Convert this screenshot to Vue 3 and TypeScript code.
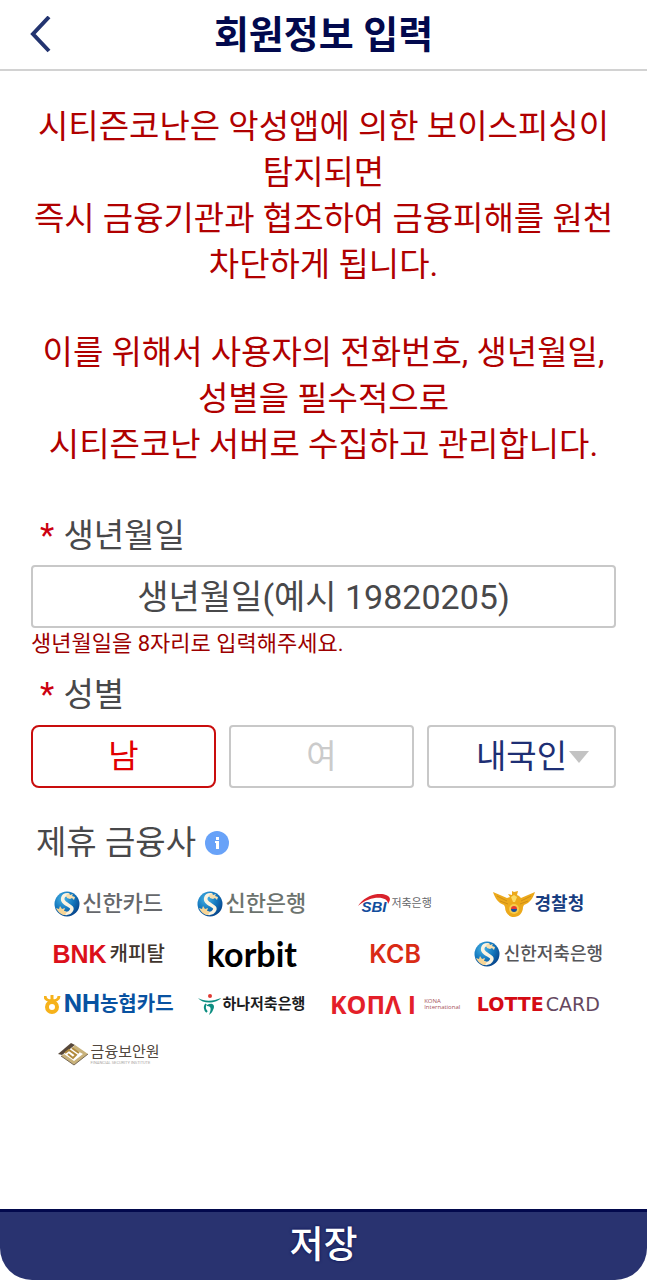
<script setup lang="ts">
import { ref } from 'vue'

const birth = ref('')
const gender = ref<'M' | 'F'>('M')
const nationality = ref('domestic')
</script>

<template>
  <div class="page">
    <header class="header">
      <button type="button" class="back" aria-label="뒤로">
        <svg width="22" height="38" viewBox="0 0 22 38" fill="none">
          <path d="M19 1 L3 18 L19 35" stroke="#233470" stroke-width="4" />
        </svg>
      </button>
      <h1>회원정보 입력</h1>
    </header>

    <main class="content">
      <section class="notice">
        <p>시티즌코난은 악성앱에 의한 보이스피싱이 탐지되면<br />즉시 금융기관과 협조하여 금융피해를 원천 차단하게 됩니다.</p>
        <p>이를 위해서 사용자의 전화번호, 생년월일, 성별을 필수적으로<br />시티즌코난 서버로 수집하고 관리합니다.</p>
      </section>

      <form id="member" class="form" @submit.prevent>
        <label class="title" for="birth"><span class="star">*</span> 생년월일</label>
        <input id="birth" v-model="birth" class="box birth" type="text" inputmode="numeric" maxlength="8" placeholder="생년월일(예시 19820205)" />
        <p class="hint">생년월일을 8자리로 입력해주세요.</p>

        <div id="gender-title" class="title gender-title"><span class="star">*</span> 성별</div>
        <div class="choices" role="group" aria-labelledby="gender-title">
          <label class="box choice" :class="{ on: gender === 'M' }">
            <input v-model="gender" type="radio" name="gender" value="M" />남
          </label>
          <label class="box choice" :class="{ on: gender === 'F' }">
            <input v-model="gender" type="radio" name="gender" value="F" />여
          </label>
          <div class="nation">
            <select v-model="nationality" class="box" aria-label="국적">
              <option value="domestic">내국인</option>
              <option value="foreign">외국인</option>
            </select>
            <svg class="arrow" width="20" height="12" viewBox="0 0 20 12"><path d="M0 0H20L10 12Z" fill="#c3c3c3" /></svg>
          </div>
        </div>
      </form>

      <section class="partners">
        <h2>
          제휴 금융사
          <button type="button" class="info" aria-label="제휴 금융사 안내">
            <svg width="24" height="24" viewBox="0 0 24 24">
              <circle cx="12" cy="12" r="12" fill="#68a2f8" />
              <rect x="11" y="6" width="3" height="3" fill="#fff" />
              <path d="M10 10H14V18H11V12H10Z" fill="#fff" />
            </svg>
          </button>
        </h2>

        <svg class="defs" aria-hidden="true">
          <defs>
            <radialGradient id="globe" cx="35%" cy="30%" r="75%">
              <stop offset="0" stop-color="#48b3e5" />
              <stop offset="0.55" stop-color="#1478be" />
              <stop offset="1" stop-color="#07448b" />
            </radialGradient>
            <symbol id="shinhan" viewBox="0 0 26 26">
              <circle cx="13" cy="13" r="12.5" fill="url(#globe)" />
              <path d="M15 4 C8 3 7 9 11 12 C15 15 20 16 17 20 C15 23 11 23 8 21" stroke="#fbf4e2" stroke-width="3.5" fill="none" />
              <path d="M12 4 L15 2 L16 4 L19 3 L18 5 L21 6 L20 9 L18 7 L16 8 L13 7Z" fill="#f7dfaf" />
              <path d="M2 17 L5 18 L6 15 L8 18 L11 17 L10 20 L13 21 L11 24 C7 24 4 21 2 17Z" fill="#f7d596" />
            </symbol>
          </defs>
        </svg>

        <ul class="logos">
          <li class="shinhan card"><svg width="26" height="26"><use href="#shinhan" /></svg><span>신한카드</span></li>
          <li class="shinhan bank"><svg width="26" height="26"><use href="#shinhan" /></svg><span>신한은행</span></li>
          <li class="sbi">
            <span class="sbi-mark">
              <svg width="32" height="14" viewBox="0 0 32 14"><path d="M0 12 C7 1 22 -3 30 2 C33 4 32 7 30 10 C30 2 13 1 0 12Z" fill="#d9222c" /></svg>
              <b>SBI</b>
            </span>
            <span>저축은행</span>
          </li>
          <li class="police">
            <svg width="42" height="28" viewBox="0 0 42 28">
              <path d="M0 2 L14 8 L17 7 L15 4 L19 5 L19 1 L21 2 L25 1 L24 5 L26 6 L28 8 L42 2 C40 8 37 13 31 15 L30 17 C30 23 26 27 21 27 C16 27 12 23 12 17 L11 15 C5 13 2 8 0 2Z" fill="#eca91b" />
              <path d="M4 6 L14 11 M7 11 L15 14 M38 6 L28 11 M35 11 L27 14" stroke="#d08f16" fill="none" />
              <path d="M18 7 L21 5 L24 7 L22 12 H20Z" fill="#fbdc65" />
              <circle cx="21" cy="19" r="5" fill="#f6ca4b" />
              <path d="M18 19 A3 3 0 0 1 24 19Z" fill="#e43835" />
              <path d="M18 19 A3 3 0 0 0 24 19Z" fill="#164e9b" />
            </svg>
            <span>경찰청</span>
          </li>
          <li class="bnk"><b>BNK</b><span>캐피탈</span></li>
          <li class="korbit">korbit</li>
          <li class="kcb">KCB</li>
          <li class="shinhan savings"><svg width="26" height="26"><use href="#shinhan" /></svg><span>신한저축은행</span></li>
          <li class="nh">
            <svg width="17" height="19" viewBox="0 0 17 19" fill="none">
              <circle cx="8" cy="12" r="5" stroke="#f6b21b" stroke-width="4" />
              <path d="M1 1 C1 4 4 6 8 6 C12 6 15 4 15 1 M8 0 V6" stroke="#f6b21b" stroke-width="3" />
            </svg>
            <b>NH</b><span>농협카드</span>
          </li>
          <li class="hana">
            <svg width="24" height="22" viewBox="0 0 24 22">
              <circle cx="12" cy="3" r="2" fill="#e13b35" />
              <path d="M0 5 C7 9 16 8 23 5 C20 10 5 12 0 5Z" fill="#0b8d80" />
              <path d="M8 11 C6 14 7 17 9 19" stroke="#0b8d80" stroke-width="2" fill="none" />
              <path d="M9 12 C14 9 18 12 15 17 C14 20 12 21 11 22 C13 17 14 13 9 13Z" fill="#0b8d80" />
            </svg>
            <span>하나저축은행</span>
          </li>
          <li class="kona"><b>KOΠΛ I</b><small>KONA<br />International</small></li>
          <li class="lotte"><b>LOTTE</b><span>CARD</span></li>
          <li class="fsi">
            <svg width="30" height="24" viewBox="0 0 30 24" fill="none">
              <path d="M0 12 L13 1 L17 3 L4 13Z" fill="#57483a" />
              <path d="M17 3 L30 12 L16 23 L3 14 L6 12 L16 19 L25 12 L14 6Z" fill="#c9b27a" />
              <path d="M3 14 L16 23 L30 12" stroke="#776957" />
              <path d="M7 11 L11 8 L18 13 L15 16 L10 12 M14 6 L21 11" stroke="#b28b3d" stroke-width="2" />
            </svg>
            <span class="fsi-text"><span>금융보안원</span><small>FINANCIAL SECURITY INSTITUTE</small></span>
          </li>
        </ul>
      </section>
    </main>

    <button class="save" type="submit" form="member">저장</button>
  </div>
</template>

<style>
body {
  margin: 0;
  background: #fff;
}
</style>

<style scoped>
* {
  box-sizing: border-box;
}
.page {
  min-height: 100vh;
  display: flex;
  flex-direction: column;
  font-family: Roboto, "Noto Sans CJK KR", sans-serif;
  background: #fff;
}
button, input, select {
  font-family: inherit;
}
button {
  border: 0;
  padding: 0;
  background: none;
}
h1, h2, p, ul {
  margin: 0;
  padding: 0;
}
svg {
  display: block;
  flex: none;
}
.header {
  height: 71px;
  border-bottom: 2px solid #d2d2d2;
  display: grid;
  grid-template-columns: 60px 1fr 60px;
  align-items: center;
}
.back {
  justify-self: end;
  padding-right: 8px;
}
h1 {
  text-align: center;
  font-size: 38px;
  line-height: 68px;
  color: #02094d;
}
.content {
  flex: 1;
  padding: 33px 31px;
}
.notice {
  display: grid;
  gap: 42px;
  text-align: center;
  color: #b00000;
  font-size: 33px;
  line-height: 46px;
  word-break: keep-all;
}
.form {
  margin-top: 44px;
}
.title {
  display: block;
  padding-left: 9px;
  font-size: 33px;
  line-height: 48px;
  color: #48484a;
}
.star {
  margin-right: 1px;
  color: #cc0010;
}
.box {
  height: 63px;
  border: 2px solid #c8c8c8;
  border-radius: 4px;
  background: #fff;
  font-size: 33px;
}
.birth {
  display: block;
  width: 100%;
  margin-top: 5px;
  padding: 0;
  text-align: center;
  font-size: 34px;
  color: #48484a;
}
.birth::placeholder {
  color: #48484a;
  opacity: 1;
}
.hint {
  font-size: 22px;
  line-height: 32px;
  color: #9c0000;
}
.gender-title {
  margin-top: 11px;
}
.choices {
  margin-top: 6px;
  display: grid;
  grid-template-columns: 185fr 185fr 189fr;
  gap: 13px;
}
.choice {
  position: relative;
  display: flex;
  align-items: center;
  justify-content: center;
  line-height: 56px;
  color: #cbcbcb;
}
.choice input {
  position: absolute;
  opacity: 0;
}
.choice.on {
  border-color: #c90d0d;
  border-radius: 8px;
  color: #e20000;
}
.nation {
  position: relative;
}
.nation select {
  appearance: none;
  width: 100%;
  padding: 0 47px 0 0;
  text-align: right;
  text-align-last: right;
  color: #1e2f74;
}
.arrow {
  position: absolute;
  right: 27px;
  top: 26px;
  pointer-events: none;
}
.partners {
  margin-top: 31px;
}
h2 {
  display: flex;
  align-items: center;
  gap: 9px;
  padding-left: 5px;
  font-size: 33px;
  line-height: 48px;
  font-weight: 400;
  color: #48484a;
}
.defs {
  position: absolute;
  width: 0;
  height: 0;
}
.logos {
  list-style: none;
  margin: 12px 6px 0;
  display: grid;
  grid-template-columns: repeat(4, minmax(0, 1fr));
  grid-auto-rows: 50px;
}
.logos li {
  display: flex;
  align-items: center;
  justify-content: center;
  white-space: nowrap;
  line-height: 24px;
}
.shinhan {
  gap: 2px;
  font-weight: 500;
  font-size: 22px;
  color: #66686c;
}
.bank {
  color: #6c736e;
}
.logos .savings {
  font-size: 18px;
  gap: 4px;
  color: #55565a;
}
.sbi {
  gap: 1px;
  font-size: 11px;
  color: #66676a;
}
.sbi-mark {
  display: grid;
  font-size: 15px;
  line-height: 16px;
  font-style: italic;
  color: #124d9c;
}
.sbi-mark svg, .sbi-mark b {
  grid-area: 1 / 1;
}
.sbi-mark b {
  padding: 5px 0 0 3px;
  font-family: "Liberation Sans", sans-serif;
}
.police {
  font-size: 18px;
  font-weight: 700;
  color: #173d80;
}
.bnk {
  gap: 3px;
  font-size: 20px;
  font-weight: 500;
  color: #40352d;
}
.bnk b {
  font: 700 25px/24px "Liberation Sans", sans-serif;
  color: #dc101b;
}
.korbit {
  font: 700 34px Lato, sans-serif;
  color: #000;
}
.kcb {
  font: 600 25px Inter, sans-serif;
  color: #d92b15;
}
.nh {
  font-size: 20px;
  font-weight: 700;
  color: #0852a1;
}
.nh svg {
  margin-right: 3px;
}
.nh b {
  font: 700 24px/24px Inter, sans-serif;
}
.hana {
  font-size: 15px;
  font-weight: 700;
  color: #1c1c1e;
}
.kona {
  gap: 8px;
}
.kona b {
  font: 700 25px/24px "Open Sans", sans-serif;
  color: #e41f2a;
}
.kona small {
  font: 400 6px/6px "Open Sans", sans-serif;
  color: #a65258;
}
.lotte {
  gap: 2px;
  font: 700 19px "DejaVu Sans", sans-serif;
  color: #d50b14;
}
.lotte span {
  font-weight: 400;
  color: #654860;
}
.fsi {
  gap: 3px;
  color: #51473e;
}
.fsi-text {
  display: grid;
  font-size: 15px;
  line-height: 18px;
}
.fsi small {
  font-size: 4px;
  line-height: 4px;
  color: #aaa6a2;
}
.save {
  height: 71px;
  border-top: 3px solid #02094d;
  border-radius: 0 0 32px 32px;
  background: #293370;
  color: #fff;
  font-size: 37px;
  font-weight: 500;
  line-height: 56px;
  text-shadow: 0 0 3px #02094d;
}
</style>
